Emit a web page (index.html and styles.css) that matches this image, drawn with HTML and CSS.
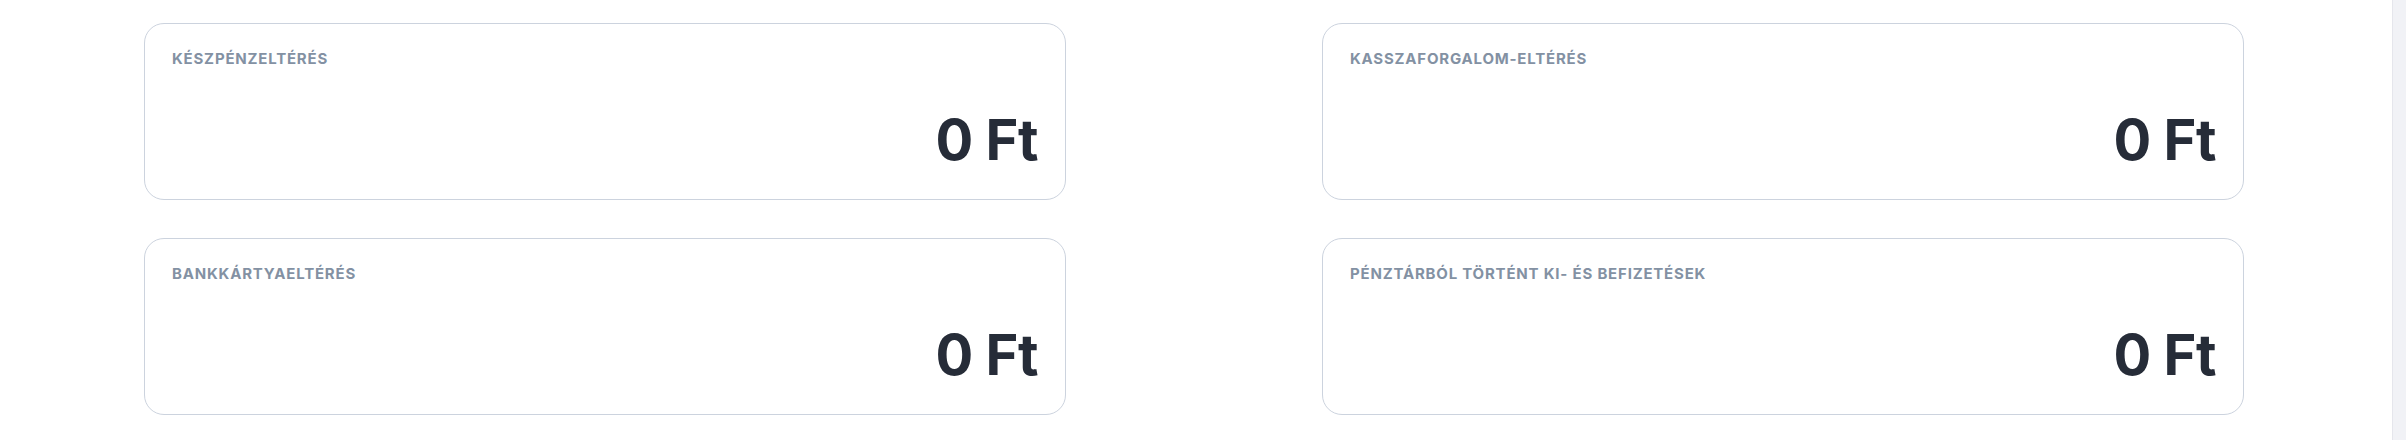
FILE: index.html
```html
<!DOCTYPE html>
<html lang="hu">
<head>
<meta charset="utf-8">
<title>Eltérések</title>
<link rel="stylesheet" href="styles.css">
</head>
<body>
<div class="page">
  <main class="content">
    <div class="grid">
      <section class="card">
        <div class="label">Készpénzeltérés</div>
        <div class="value">0 Ft</div>
      </section>
      <section class="card">
        <div class="label">Kasszaforgalom-eltérés</div>
        <div class="value">0 Ft</div>
      </section>
      <section class="card">
        <div class="label">Bankkártyaeltérés</div>
        <div class="value">0 Ft</div>
      </section>
      <section class="card">
        <div class="label">Pénztárból történt ki- és befizetések</div>
        <div class="value">0 Ft</div>
      </section>
    </div>
  </main>
  <div class="scrollbar"></div>
</div>
</body>
</html>
```
FILE: styles.css
```css
html, body {
  margin: 0;
  padding: 0;
  background: #ffffff;
  font-family: Inter, "Noto Sans", "Liberation Sans", sans-serif;
}

.page {
  display: flex;
  height: 440px;
  overflow: hidden;
}

.content {
  flex: 1;
  padding: 23px 148px 0 144px;
}

.grid {
  display: grid;
  grid-template-columns: 922px 922px;
  column-gap: 256px;
  row-gap: 38px;
}

.card {
  box-sizing: border-box;
  height: 177px;
  border: 1px solid #ccd3de;
  border-radius: 20px;
  padding: 25px 27px 0 27px;
  display: flex;
  flex-direction: column;
}

.label {
  font-size: 15px;
  line-height: 20px;
  font-weight: 700;
  letter-spacing: 0.8px;
  text-transform: uppercase;
  color: #8391a3;
}

.value {
  margin-top: 41px;
  align-self: flex-end;
  font-size: 56px;
  line-height: 60px;
  font-weight: 700;
  letter-spacing: -0.5px;
  color: #262c38;
}

.scrollbar {
  width: 14px;
  flex: 0 0 14px;
  background: #f1f2f6;
  border-left: 1px solid #e5e6ec;
}
```
